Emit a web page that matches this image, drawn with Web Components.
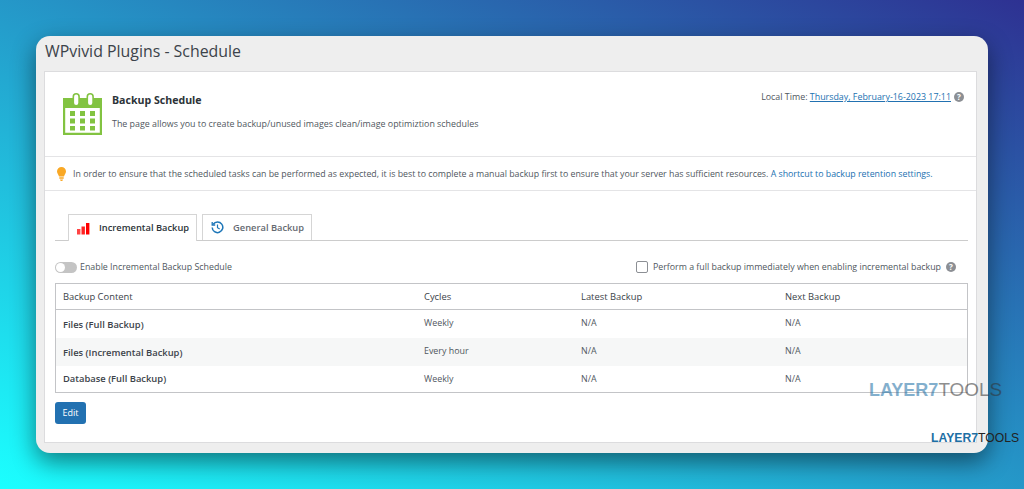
<!DOCTYPE html>
<html lang="en"><head><meta charset="utf-8"><title>WPvivid Schedule</title>
<style>
html,body{margin:0;height:489px;overflow:hidden}
body{background:linear-gradient(to top right,#1bffff,#2e3192);font-family:"Open Sans","Noto Sans",sans-serif;color:#50575e}
</style></head><body>
<template id="t-stage"><style>
:host{display:block;position:relative;height:489px;padding:36px 36px 0 36px;box-sizing:border-box}
</style><slot></slot></template>

<template id="t-window"><style>
:host{display:flex;flex-direction:column;height:417px;background:#eee;border-radius:14px;box-shadow:0 9px 24px rgba(0,0,0,.48);padding:0 11px 10px 8px;box-sizing:border-box}
h1{margin:0;height:35px;padding-left:1px;font:400 15.9px/30px "Open Sans",sans-serif;color:#3c434a}
.panel{flex:1;background:#fff;border:1px solid #dcdcde;box-sizing:border-box;display:flex;flex-direction:column}
</style><h1><slot name="title"></slot></h1><div class="panel"><slot></slot></div></template>

<template id="t-head"><style>
:host{display:flex;height:85px;box-sizing:border-box;border-bottom:1px solid #e4e4e6;padding:21px 12px 0 18px;gap:10px}
svg{width:39px;height:42px;flex:none}
.m{flex:1}
b{display:block;font:700 10.6px/15px "Open Sans",sans-serif;color:#2c3338}
p{margin:9px 0 0;font:400 8.9px/14px "Open Sans",sans-serif;color:#50575e}
.t{font:400 8.9px/14px "Open Sans",sans-serif;display:flex;align-items:center;gap:3px;height:14px;margin-top:-3px}
</style><svg viewBox="0 0 39 42"><path fill="#82c341" fill-rule="evenodd" d="M0 5h39v37h-39zM2.200 15v24.800h34.600v-24.800z"/><rect x="10.300" y=".8" width="5.800" height="12" rx="2.900" fill="#fff" stroke="#82c341" stroke-width="1.600"/><rect x="24.300" y=".8" width="5.800" height="12" rx="2.900" fill="#fff" stroke="#82c341" stroke-width="1.600"/><g fill="#82c341"><rect x="7" y="18" width="5" height="5"/><rect x="17" y="18" width="5" height="5"/><rect x="27" y="18" width="5" height="5"/><rect x="7" y="25.500" width="5" height="5"/><rect x="17" y="25.500" width="5" height="5"/><rect x="27" y="25.500" width="5" height="5"/><rect x="7" y="33" width="5" height="4.500"/><rect x="17" y="33" width="5" height="4.500"/><rect x="27" y="33" width="5" height="4.500"/></g></svg>
<div class="m"><b><slot name="title"></slot></b><p><slot name="desc"></slot></p></div>
<div class="t"><slot name="time"></slot></div></template>

<template id="t-help"><style>
:host{display:inline-flex;width:10px;height:10px;border-radius:50%;background:#8c8f94;color:#fff;font:700 8px/10px "Open Sans",sans-serif;align-items:center;justify-content:center;flex:none}
</style>?</template>

<template id="t-notice"><style>
:host{display:flex;align-items:center;height:34px;box-sizing:border-box;border-bottom:1px solid #e4e4e6;padding:0 0 0 12px;gap:7px;font:400 8.8px/14px "Open Sans",sans-serif;color:#50575e;white-space:nowrap}
svg{width:9px;height:14px;flex:none}
</style><svg viewBox="0 0 9 14"><path fill="#f9a825" d="M4.500 0a4.500 4.500 0 0 1 4.500 4.500c0 2-1.600 3-2 5h-5c-.4-2-2-3-2-5a4.500 4.500 0 0 1 4.500-4.500z"/><path fill="#f9a825" d="M2.300 10.300h4.400v1.500h-4.400zM3 12.500h3l-.7 1.500h-1.600z"/></svg><span><slot></slot></span></template>

<template id="t-tabs"><style>
:host{display:flex;gap:5px;margin:23px 8px 0 10px;padding-left:13px;border-bottom:1px solid #ccc;height:26px}
</style><slot></slot></template>

<template id="t-tab"><style>
:host{display:flex;align-items:center;gap:9px;height:26px;padding:0 7px 0 8px;box-sizing:border-box;border:1px solid #d5d5d5;border-bottom:0;background:#fff;color:#646970;font:600 9.3px/14px "Open Sans",sans-serif;white-space:nowrap}
:host([active]){color:#2c3338;height:27px;margin-bottom:-1px}
::slotted(svg){width:13px;height:13px;flex:none}
</style><slot name="icon"></slot><slot></slot></template>

<template id="t-options"><style>
:host{display:flex;align-items:center;justify-content:space-between;height:14px;margin:19px 20px 0 10px;font:400 8.83px/14px "Open Sans",sans-serif;color:#50575e}
.l,.r{display:flex;align-items:center}
.sw{width:22px;height:11px;border-radius:6px;background:#c4c4c4;position:relative;margin-right:3px}
.sw::after{content:"";position:absolute;left:1px;top:1px;width:9px;height:9px;border-radius:50%;background:#fff}
.cb{width:10px;height:10px;border:1px solid #8c8f94;border-radius:2px;background:#fff;margin-right:5px}
.r ::slotted(wp-help){margin-left:5px}
</style><div class="l"><span class="sw"></span><slot name="left"></slot></div><div class="r"><span class="cb"></span><slot name="right"></slot></div></template>

<template id="t-table"><style>
:host{display:block;margin:9px 8px 0 10px;border:1px solid #c3c4c7;box-sizing:border-box;height:110px}
</style><slot></slot></template>

<template id="t-row"><style>
:host{display:grid;grid-template-columns:361px 157px 204px 1fr;align-items:center;height:28px;box-sizing:border-box;padding-bottom:2px;font:400 8.9px/14px "Open Sans",sans-serif;color:#50575e}
:host([head]){border-bottom:1px solid #c3c4c7;color:#3c434a;font-size:9.4px;height:26px;padding-bottom:0}
:host([alt]){background:#f6f7f7}
:host([last]){height:27px;padding-bottom:1px}
div{padding-left:7px}
.a{padding-top:var(--o,4px)}
:host([head]) .a{padding-top:0}
::slotted(b){font-weight:600;font-size:9.4px;color:#3c434a}
</style><div class="a"><slot name="a"></slot></div><div><slot name="b"></slot></div><div><slot name="c"></slot></div><div><slot name="d"></slot></div></template>

<template id="t-btn"><style>
:host{display:inline-flex;align-items:center;justify-content:center;width:31px;height:22px;margin:9px 0 0 10px;background:#2271b1;border-radius:3px;color:#fff;font:400 9px/14px "Open Sans",sans-serif;align-self:flex-start}
</style><slot></slot></template>

<wp-stage>
<wp-window>
<span slot="title">WPvivid Plugins - Schedule</span>
<wp-head>
<span slot="title">Backup Schedule</span>
<span slot="desc">The page allows you to create backup/unused images clean/image optimiztion schedules</span>
<span slot="time">Local Time: <a href="#" style="color:#2271b1;text-decoration:underline">Thursday, February-16-2023 17:11 </a></span>
<wp-help slot="time"></wp-help>
</wp-head>
<wp-notice>In order to ensure that the scheduled tasks can be performed as expected, it is best to complete a manual backup first to ensure that your server has sufficient resources. <a href="#" style="color:#2271b1;text-decoration:none">A shortcut to backup retention settings.</a></wp-notice>
<wp-tabs>
<wp-tab active><svg slot="icon" viewBox="0 0 13 13"><rect x="0" y="7" width="3.400" height="5.500" fill="#f44"/><rect x="4.500" y="4.500" width="3.400" height="8" fill="#f22"/><rect x="9" y="1" width="3.400" height="11.500" fill="#f00"/></svg>Incremental Backup</wp-tab>
<wp-tab><svg slot="icon" viewBox="0 0 13 13" fill="none" stroke="#1d76b8" stroke-width="1.500"><path d="M2.200 3.200a5.300 5.300 0 1 1-1 3.300"/><path d="M1.200 1v3h3" stroke-width="1.300"/><path d="M6.500 3.500v3.200l2.200 1.300" stroke-width="1.200"/></svg>General Backup</wp-tab>
</wp-tabs>
<wp-options><span slot="left">Enable Incremental Backup Schedule</span><span slot="right">Perform a full backup immediately when enabling incremental backup</span><wp-help slot="right"></wp-help></wp-options>
<wp-table>
<wp-row head><span slot="a">Backup Content</span><span slot="b">Cycles</span><span slot="c">Latest Backup</span><span slot="d">Next Backup</span></wp-row>
<wp-row><b slot="a">Files (Full Backup)</b><span slot="b">Weekly</span><span slot="c">N/A</span><span slot="d">N/A</span></wp-row>
<wp-row alt><b slot="a">Files (Incremental Backup)</b><span slot="b">Every hour</span><span slot="c">N/A</span><span slot="d">N/A</span></wp-row>
<wp-row last style="--o:0px"><b slot="a">Database (Full Backup)</b><span slot="b">Weekly</span><span slot="c">N/A</span><span slot="d">N/A</span></wp-row>
</wp-table>
<wp-btn>Edit</wp-btn>
</wp-window>
<div style="position:absolute;left:869px;top:381px;font:700 18px/18px 'Liberation Sans',sans-serif;opacity:.55;white-space:nowrap"><span style="color:#1d6fa5">LAYER7</span><span style="color:#333;font-weight:400;font-size:18.900px">TOOLS</span></div>
<div style="position:absolute;left:931px;top:431px;font:700 12.200px/14px 'Liberation Sans',sans-serif;white-space:nowrap"><span style="color:#1d6fa5">LAYER7</span><span style="color:#222;font-weight:400">TOOLS</span></div>
</wp-stage>
<script>
for(const [tag,id] of [['wp-stage','t-stage'],['wp-window','t-window'],['wp-head','t-head'],['wp-help','t-help'],['wp-notice','t-notice'],['wp-tabs','t-tabs'],['wp-tab','t-tab'],['wp-options','t-options'],['wp-table','t-table'],['wp-row','t-row'],['wp-btn','t-btn']]){
customElements.define(tag,class extends HTMLElement{constructor(){super();this.attachShadow({mode:'open'}).appendChild(document.getElementById(id).content.cloneNode(true));}});
}
</script>
</body></html>
